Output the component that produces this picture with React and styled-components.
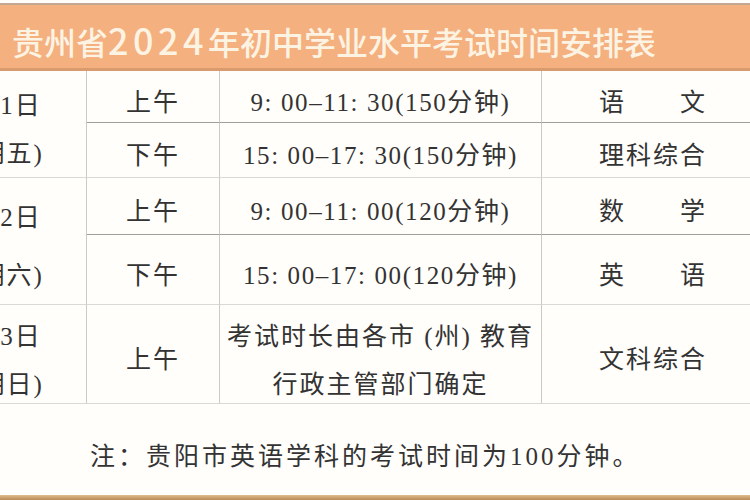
import React from 'react';
import styled, { createGlobalStyle } from 'styled-components';

const GlobalStyle = createGlobalStyle`
    body {
        margin: 0;
        background: #fffefb;
    }
`;

const groups = [
    {
        date: ['6月21日', '(星期五)'],
        rows: [
            { period: '上午', time: '9: 00–11: 30(150分钟)', subject: '语　　文' },
            { period: '下午', time: '15: 00–17: 30(150分钟)', subject: '理科综合' },
        ],
    },
    {
        date: ['6月22日', '(星期六)'],
        rows: [
            { period: '上午', time: '9: 00–11: 00(120分钟)', subject: '数　　学' },
            { period: '下午', time: '15: 00–17: 00(120分钟)', subject: '英　　语' },
        ],
    },
];

const App = () => {
    return (
        <Page>
            <GlobalStyle />
            <Header>
                <Title>贵州省<Digits>2024</Digits>年初中学业水平考试时间安排表</Title>
            </Header>
            <Table>
                {groups.map((g, gi) => (
                    <React.Fragment key={gi}>
                        <DateCell>
                            <span>{g.date[0]}</span>
                            <span>{g.date[1]}</span>
                        </DateCell>
                        {g.rows.map((r, ri) => (
                            <React.Fragment key={ri}>
                                <Cell $inner={ri === 0}>{r.period}</Cell>
                                <Cell $inner={ri === 0} $tight>{r.time}</Cell>
                                <Cell $inner={ri === 0} $last>{r.subject}</Cell>
                            </React.Fragment>
                        ))}
                    </React.Fragment>
                ))}
                <DateCell $lines>
                    <span>6月23日</span>
                    <span>(星期日)</span>
                </DateCell>
                <Cell>上午</Cell>
                <Cell $lines>
                    <span>考试时长由各市 (州) 教育</span>
                    <span>行政主管部门确定</span>
                </Cell>
                <Cell $last>文科综合</Cell>
            </Table>
            <Note>注：贵阳市英语学科的考试时间为100分钟。</Note>
            <BottomLine />
        </Page>
    );
};
export default App;

const Page = styled.div`
    width: 750px;
    height: 500px;
    overflow: hidden;
    display: flex;
    flex-direction: column;
    background: #fffefb;
`;

const Header = styled.div`
    margin-top: 3px;
    height: 68px;
    box-sizing: border-box;
    border-top: 2px solid #c3a793;
    border-bottom: 3px solid #d99a6d;
    background: #f4b07f;
    display: flex;
    align-items: center;
    padding: 5px 0 0 12px;
`;

const Title = styled.h1`
    margin: 0;
    font-family: "Noto Sans CJK SC", "Noto Sans", sans-serif;
    font-size: 32px;
    font-weight: 500;
    letter-spacing: 0;
    color: #fdf3e3;
    white-space: nowrap;
`;

const Digits = styled.span`
    font-size: 36px;
    letter-spacing: 4.5px;
`;

const Table = styled.div`
    display: grid;
    grid-template-columns: 187px 133px 322px 222px;
    grid-template-rows: 52px 55px 57px 70px 99px;
    margin-left: -100px;
    font-family: "Liberation Serif", "Noto Sans CJK SC", serif;
    font-size: 25px;
    letter-spacing: 2px;
    color: #333;
`;

const Cell = styled.div`
    box-sizing: border-box;
    border-bottom: 1px solid ${p => (p.$inner ? '#a19e9b' : '#dcd8d3')};
    border-right: ${p => (p.$last ? 'none' : '1px solid #cdc9c4')};
    display: flex;
    flex-direction: ${p => (p.$lines ? 'column' : 'row')};
    align-items: center;
    justify-content: center;
    padding-top: ${p => (p.$lines ? '14px' : '11px')};
    line-height: ${p => (p.$lines ? '48px' : '1')};
    white-space: nowrap;
    letter-spacing: ${p => (p.$tight ? '1.6px' : '2px')};
`;

const DateCell = styled.div`
    grid-row: ${p => (p.$lines ? 'span 1' : 'span 2')};
    box-sizing: border-box;
    border-bottom: 1px solid #dcd8d3;
    border-right: 1px solid #cdc9c4;
    display: flex;
    flex-direction: column;
    align-items: center;
    justify-content: ${p => (p.$lines ? 'center' : 'space-around')};
    padding-top: ${p => (p.$lines ? '14px' : '11px')};
    line-height: ${p => (p.$lines ? '48px' : '1')};
    white-space: nowrap;
`;

const Note = styled.div`
    flex: 1;
    display: flex;
    align-items: center;
    padding: 8px 0 0 90px;
    font-family: "Liberation Serif", "Noto Sans CJK SC", serif;
    font-size: 25px;
    letter-spacing: 3px;
    color: #333;
    white-space: nowrap;
`;

const BottomLine = styled.div`
    height: 5px;
    background: linear-gradient(#e0bd8c, #b98a55);
`;
